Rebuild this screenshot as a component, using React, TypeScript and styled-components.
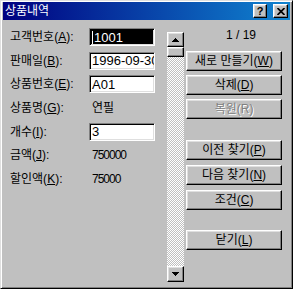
import React from "react";
import styled, { createGlobalStyle } from "styled-components";

const GlobalStyle = createGlobalStyle`
  html, body {
    margin: 0;
    padding: 0;
    background: #c0c0c0;
  }
`;

const FONT = `"Liberation Sans", "Noto Sans CJK KR", sans-serif`;

const raised = `
  background: #c0c0c0;
  box-sizing: border-box;
  border: 1px solid;
  border-color: #fff #000 #000 #fff;
  box-shadow: inset -1px -1px #808080, inset 1px 1px #dfdfdf;
`;

const Window = styled.div`
  width: 293px;
  height: 289px;
  box-sizing: border-box;
  background: #c0c0c0;
  border: 1px solid;
  border-color: #dfdfdf #000 #000 #dfdfdf;
  box-shadow: inset 1px 1px #fff, inset -1px -1px #808080;
  padding: 1px 2px 2px 2px;
  display: flex;
  flex-direction: column;
  font-family: ${FONT};
  font-size: 12px;
  color: #000;
`;

const TitleBar = styled.div`
  height: 18px;
  flex: none;
  display: flex;
  align-items: center;
  padding: 0 2px;
  background: linear-gradient(to right, #000080, #1084d0);
  color: #fff;
`;

const TitleText = styled.span`
  font-size: 12px;
  line-height: 14px;
`;

const TitleButtons = styled.div`
  margin-left: auto;
  display: flex;
  gap: 6px;
`;

const TitleButton = styled.div<{ $w: number }>`
  ${raised}
  width: ${(p) => p.$w}px;
  height: 14px;
  display: flex;
  align-items: center;
  justify-content: center;
  font-family: "Liberation Sans", sans-serif;
  font-weight: bold;
  font-size: 11px;
  line-height: 11px;
  color: #000;
`;

const Body = styled.div`
  display: flex;
  align-items: flex-start;
`;

const Form = styled.div`
  margin: 5px 0 0 7px;
  display: grid;
  grid-template-columns: 79px 66px;
  grid-template-rows: 24px 23px 24px 24px 23px 24px 24px;
  align-items: center;
`;

const Label = styled.div`
  white-space: nowrap;
  line-height: 14px;
`;

const TextBox = styled.div<{ $selected?: boolean }>`
  height: 18px;
  box-sizing: border-box;
  border: 1px solid;
  border-color: #808080 #fff #fff #808080;
  box-shadow: inset 1px 1px #000, inset -1px -1px #dfdfdf;
  background: ${(p) => (p.$selected ? "#000" : "#fff")};
  color: ${(p) => (p.$selected ? "#fff" : "#000")};
  padding: 1px 0 0 2px;
  font-size: 13px;
  line-height: 14px;
  overflow: hidden;
  white-space: nowrap;
  display: flex;
  align-items: center;
`;

const Caret = styled.span`
  display: inline-block;
  width: 1px;
  height: 13px;
  background: #fff;
  margin-right: 1px;
`;

const Value = styled.div<{ $digits?: boolean }>`
  padding-left: 3px;
  line-height: 14px;
  white-space: nowrap;
  letter-spacing: ${(p) => (p.$digits ? "-1px" : "0")};
`;

const ScrollBar = styled.div`
  margin: 12px 0 0 12px;
  width: 17px;
  height: 250px;
  display: flex;
  flex-direction: column;
  background: repeating-conic-gradient(#fff 0 25%, #c0c0c0 0 50%) 0 0 / 2px 2px;
`;

const ScrollButton = styled.div<{ $h: number }>`
  ${raised}
  height: ${(p) => p.$h}px;
  display: flex;
  align-items: center;
  justify-content: center;
  flex: none;
`;

const Track = styled.div`
  flex: 1;
`;

const Side = styled.div`
  margin: 5px 0 0 2px;
  width: 96px;
  display: flex;
  flex-direction: column;
`;

const Counter = styled.div`
  height: 20px;
  line-height: 20px;
  text-align: right;
  padding-right: 26px;
`;

const Button = styled.button<{ $gap: number }>`
  ${raised}
  margin-top: ${(p) => p.$gap}px;
  width: 96px;
  height: 20px;
  padding: 0;
  font-family: ${FONT};
  font-size: 12px;
  line-height: 14px;
  color: #000;
  white-space: nowrap;

  &:disabled {
    color: #808080;
    text-shadow: 1px 1px #fff;
  }
`;

const Arrow: React.FC<{ down?: boolean }> = ({ down }) => (
  <svg width="7" height="4" viewBox="0 0 7 4" shapeRendering="crispEdges">
    <polygon
      points={down ? "0,0 7,0 3.5,4" : "3.5,0 7,4 0,4"}
      fill="#000"
    />
  </svg>
);

const fields: { label: string; key: string; value: string; input?: boolean; selected?: boolean }[] = [
  { label: "고객번호(", key: "A", value: "1001", input: true, selected: true },
  { label: "판매일(", key: "B", value: "1996-09-30", input: true },
  { label: "상품번호(", key: "E", value: "A01", input: true },
  { label: "상품명(", key: "G", value: "연필" },
  { label: "개수(", key: "I", value: "3", input: true },
  { label: "금액(", key: "J", value: "750000" },
  { label: "할인액(", key: "K", value: "75000" },
];

const buttons: { text: string; key: string; gap: number; disabled?: boolean }[] = [
  { text: "새로 만들기(", key: "W", gap: 6 },
  { text: "삭제(", key: "D", gap: 4 },
  { text: "복원(", key: "R", gap: 4, disabled: true },
  { text: "이전 찾기(", key: "P", gap: 21 },
  { text: "다음 찾기(", key: "N", gap: 5 },
  { text: "조건(", key: "C", gap: 5 },
  { text: "닫기(", key: "L", gap: 20 },
];

export default function App() {
  return (
    <>
      <GlobalStyle />
      <Window>
        <TitleBar>
          <TitleText>상품내역</TitleText>
          <TitleButtons>
            <TitleButton $w={14}>?</TitleButton>
            <TitleButton $w={15}>
              <svg width="8" height="7" viewBox="0 0 8 7">
                <path d="M0.5 0 L7.5 7 M7.5 0 L0.5 7" stroke="#000" strokeWidth="1.7" />
              </svg>
            </TitleButton>
          </TitleButtons>
        </TitleBar>
        <Body>
          <Form>
            {fields.map((f) => (
              <React.Fragment key={f.key}>
                <Label>
                  {f.label}
                  <u>{f.key}</u>):
                </Label>
                {f.input ? (
                  <TextBox $selected={f.selected}>
                    {f.selected && <Caret />}
                    {f.value}
                  </TextBox>
                ) : (
                  <Value $digits={/^\d+$/.test(f.value)}>{f.value}</Value>
                )}
              </React.Fragment>
            ))}
          </Form>
          <ScrollBar>
            <ScrollButton $h={15}>
              <Arrow />
            </ScrollButton>
            <ScrollButton $h={10} />
            <Track />
            <ScrollButton $h={16}>
              <Arrow down />
            </ScrollButton>
          </ScrollBar>
          <Side>
            <Counter>1 / 19</Counter>
            {buttons.map((b) => (
              <Button key={b.key} $gap={b.gap} disabled={b.disabled}>
                {b.text}
                {b.disabled ? b.key : <u>{b.key}</u>})
              </Button>
            ))}
          </Side>
        </Body>
      </Window>
    </>
  );
}
